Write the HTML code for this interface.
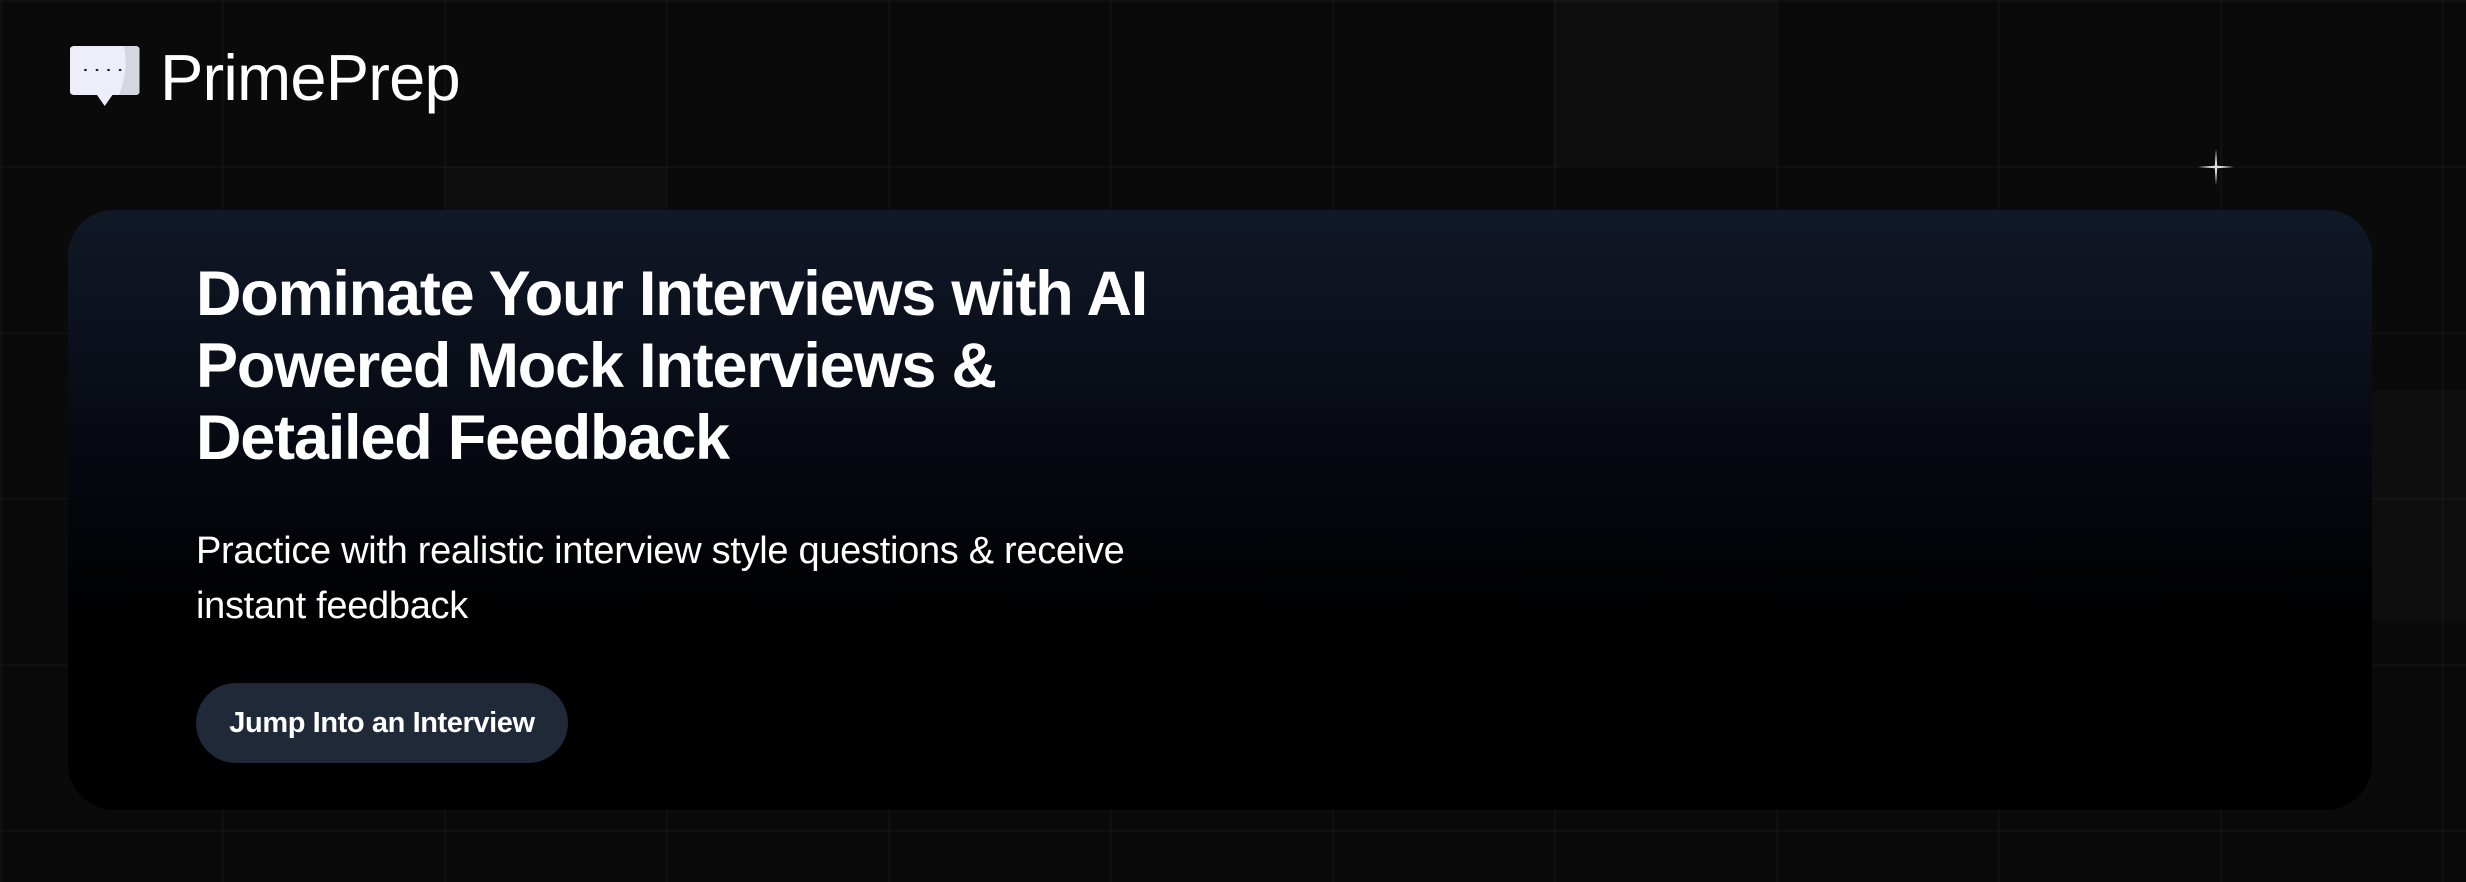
<!DOCTYPE html>
<html><head><meta charset="utf-8"><style>
html,body{margin:0;padding:0;width:2466px;height:882px;overflow:hidden;background:#0a0a0a;font-family:"Liberation Sans",sans-serif;}
.grid{position:absolute;inset:0;background-image:linear-gradient(to right,rgba(255,255,255,0.025) 2px,transparent 2px),linear-gradient(to bottom,rgba(255,255,255,0.025) 2px,transparent 2px);background-size:222px 166px;background-position:0 0;}
.cell{position:absolute;background:rgba(255,255,255,0.02);}
.logo{position:absolute;left:70px;top:45px;}
.brand{position:absolute;left:160px;top:38px;color:#fff;font-size:65px;letter-spacing:-0.8px;line-height:80px;}
.card{position:absolute;left:68px;top:210px;width:2304px;height:600px;border-radius:46px;background:linear-gradient(to bottom,#111827 0%,#060912 40%,#000 68%,#000 100%);}
h1{position:absolute;left:196px;top:258px;margin:0;color:#fff;font-size:63px;line-height:72px;font-weight:bold;letter-spacing:-1.2px;}
p{position:absolute;left:196px;top:524px;margin:0;color:#fff;font-size:38px;line-height:55px;letter-spacing:-0.3px;}
.btn{position:absolute;left:196px;top:683px;width:372px;height:80px;border-radius:40px;background:#1f2937;color:#fff;font-weight:bold;font-size:29px;letter-spacing:-0.4px;line-height:80px;text-align:center;}
</style></head><body>
<div class="grid"></div>
<div class="cell" style="left:444px;top:166px;width:222px;height:44px"></div>
<div class="cell" style="left:1554px;top:0;width:222px;height:166px"></div>
<div class="cell" style="left:2372px;top:390px;width:94px;height:230px"></div>
<svg style="position:absolute;left:2196px;top:147px" width="40" height="40" viewBox="0 0 40 40"><path d="M20 2 L21.2 18.8 L38 20 L21.2 21.2 L20 38 L18.8 21.2 L2 20 L18.8 18.8Z" fill="#ddd"/></svg>
<svg class="logo" width="72" height="62" viewBox="0 0 56 62" preserveAspectRatio="none"><path d="M3 1 H51 A3 3 0 0 1 54 4 V47 A3 3 0 0 1 51 50 H33 L27 61 L21 50 H3 A3 3 0 0 1 0 47 V4 A3 3 0 0 1 3 1Z" fill="#eeeef8"/><path d="M42 1 H51 A3 3 0 0 1 54 4 V47 A3 3 0 0 1 51 50 H38 Q46 26 42 1Z" fill="#d6d6e2"/><circle cx="12" cy="25" r="1.1" fill="#222"/><circle cx="21" cy="25" r="1.1" fill="#222"/><circle cx="30" cy="25" r="1.1" fill="#222"/><circle cx="39" cy="25" r="1.1" fill="#222"/></svg>
<div class="brand">PrimePrep</div>
<div class="card"></div>
<h1>Dominate Your Interviews with AI<br>Powered Mock Interviews &amp;<br>Detailed Feedback</h1>
<p>Practice with realistic interview style questions &amp; receive<br>instant feedback</p>
<div class="btn">Jump Into an Interview</div>
</body></html>
